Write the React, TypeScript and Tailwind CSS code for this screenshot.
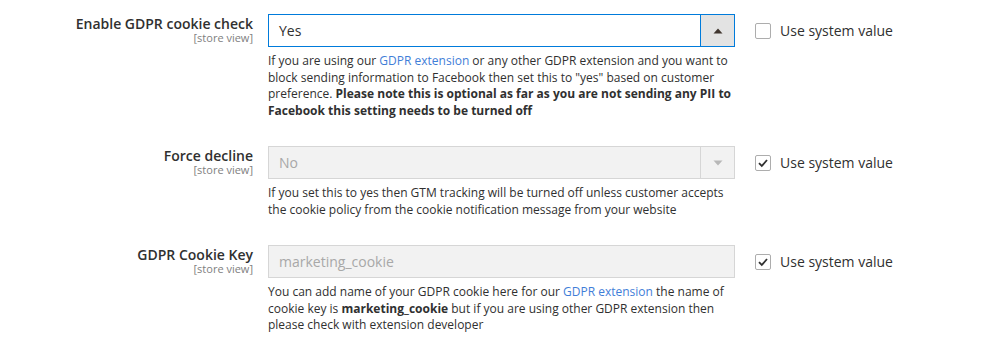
import { ReactNode } from "react";

const font = { fontFamily: "'Open Sans', 'Noto Sans', sans-serif" };

type RowProps = {
  label: string;
  control: ReactNode;
  help: ReactNode;
  checked: boolean;
};

const Arrow = ({ up, disabled }: { up?: boolean; disabled?: boolean }) => (
  <svg width="10" height="6" viewBox="0 0 10 6" className={disabled ? "text-[#b8b8b8]" : "text-[#41362f]"}>
    {up ? <path d="M0.5 5.5 L5 0.5 L9.5 5.5 Z" fill="currentColor" /> : <path d="M0.5 0.5 L5 5.5 L9.5 0.5 Z" fill="currentColor" />}
  </svg>
);

const Checkbox = ({ checked }: { checked: boolean }) => (
  <span className="flex items-center justify-center w-[16px] h-[16px] rounded-[2px] border border-[#adadad] bg-white">
    {checked && (
      <svg width="12" height="12" viewBox="0 0 12 12">
        <path d="M2 6.2 L4.8 9 L10 3" fill="none" stroke="#303030" strokeWidth="1.8" />
      </svg>
    )}
  </span>
);

const Row = ({ label, control, help, checked }: RowProps) => (
  <div className="flex items-start">
    <div className="w-[253px] text-right pt-[1px]">
      <div className="text-[14px] leading-[18px] font-semibold text-[#303030]">{label}</div>
      <div className="text-[11px] leading-[10px] text-[#808080]">[store view]</div>
    </div>
    <div className="ml-[15px] w-[467px]">
      {control}
      <div className="mt-[6px] text-[12px] leading-[16.5px] text-[#303030]">{help}</div>
    </div>
    <label className="ml-[20px] h-[33px] flex items-center gap-[9px] text-[14px] text-[#303030]">
      <Checkbox checked={checked} />
      Use system value
    </label>
  </div>
);

const link = "text-[#3f7ed8]";

export default function App() {
  return (
    <div className="bg-white w-[982px] h-[350px] pt-[14px] flex flex-col gap-[27px]" style={font}>
      <Row
        label="Enable GDPR cookie check"
        checked={false}
        control={
          <div className="flex h-[33px] border border-[#007bdb] bg-white">
            <div className="flex-1 flex items-center pl-[10px] text-[14px] text-[#303030]">Yes</div>
            <div className="w-[34px] flex items-center justify-center bg-[#e3e3e3] border-l border-[#007bdb]">
              <Arrow up />
            </div>
          </div>
        }
        help={
          <>
            If you are using our <span className={link}>GDPR extension</span> or any other GDPR extension and you want to
            block sending information to Facebook then set this to "yes" based on customer preference.{" "}
            <b className="font-bold">
              Please note this is optional as far as you are not sending any PII to Facebook this setting needs to be
              turned off
            </b>
          </>
        }
      />
      <Row
        label="Force decline"
        checked
        control={
          <div className="flex h-[33px] border border-[#d6d6d6] bg-[#f2f2f2]">
            <div className="flex-1 flex items-center pl-[10px] text-[14px] text-[#a8a8a8]">No</div>
            <div className="w-[34px] flex items-center justify-center border-l border-[#d6d6d6]">
              <Arrow disabled />
            </div>
          </div>
        }
        help={
          <>
            If you set this to yes then GTM tracking will be turned off unless customer accepts the cookie policy from
            the cookie notification message from your website
          </>
        }
      />
      <Row
        label="GDPR Cookie Key"
        checked
        control={
          <div className="flex items-center h-[33px] border border-[#d6d6d6] bg-[#f2f2f2] pl-[10px] text-[14px] text-[#a8a8a8]">
            marketing_cookie
          </div>
        }
        help={
          <>
            You can add name of your GDPR cookie here for our <span className={link}>GDPR extension</span> the name of
            cookie key is <b className="font-bold">marketing_cookie</b> but if you are using other GDPR extension then
            please check with extension developer
          </>
        }
      />
    </div>
  );
}
